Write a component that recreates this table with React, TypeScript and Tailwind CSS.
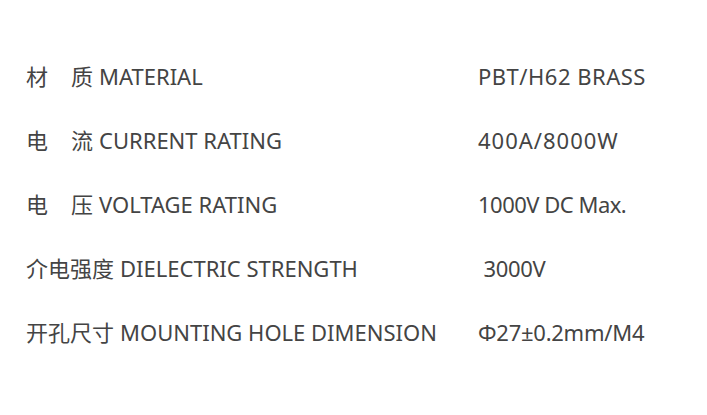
const rows = [
  { cn: ['材', '质'], en: 'MATERIAL', value: 'PBT/H62 BRASS', track: 'tracking-[0.5px]' },
  { cn: ['电', '流'], en: 'CURRENT RATING', value: '400A/8000W', track: 'tracking-[1px]' },
  { cn: ['电', '压'], en: 'VOLTAGE RATING', value: '1000V DC Max.', track: 'tracking-[-0.5px]' },
  { cn: ['介电强度'], en: 'DIELECTRIC STRENGTH', value: '\u00a03000V', track: 'tracking-[-0.3px]' },
  { cn: ['开孔尺寸'], en: 'MOUNTING HOLE DIMENSION', value: 'Φ27±0.2mm/M4', track: 'tracking-[-0.25px]' },
];

export default function App() {
  return (
    <div
      className="w-[707px] h-[415px] bg-white pt-[44px] pl-[26px] text-[#444] text-[22px]"
      style={{ fontFamily: '"Noto Sans", "Noto Sans CJK SC", sans-serif' }}
    >
      {rows.map((r) => (
        <div key={r.en} className="flex items-center h-16">
          <div className="w-[452px] flex items-center whitespace-nowrap">
            {r.cn.length === 2 ? (
              <>
                <span>{r.cn[0]}</span>
                <span className="ml-[23px]">{r.cn[1]}</span>
              </>
            ) : (
              <span>{r.cn[0]}</span>
            )}
            <span className="ml-[6px]">{r.en}</span>
          </div>
          <div className={`whitespace-nowrap ${r.track}`}>{r.value}</div>
        </div>
      ))}
    </div>
  );
}
